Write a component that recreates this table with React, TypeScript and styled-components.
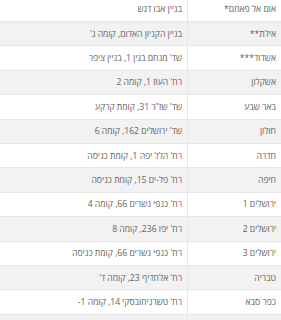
import React from "react";
import styled, { createGlobalStyle } from "styled-components";

const Global = createGlobalStyle`
  html, body { margin: 0; padding: 0; background: #ffffff; }
  body { font-family: "Open Sans", "Noto Sans", sans-serif; overflow: hidden; }
`;

const Table = styled.table`
  width: 100%;
  border-collapse: collapse;
  direction: rtl;
  margin-top: -2.4px;
  font-family: "Open Sans", "Noto Sans", sans-serif;
  font-size: 8.6px;
  color: #626262;
`;

const Row = styled.tr<{ $shade: boolean }>`
  background: ${(p) => (p.$shade ? "#f2f2f2" : "#ffffff")};
  border-bottom: 1px solid #e6e6e6;
`;

const Cell = styled.td<{ $first?: boolean }>`
  padding: 4.5px 5px 4.5px 5px;
  height: 14.4px;
  line-height: 14.4px;
  text-align: right;
  white-space: nowrap;
  width: ${(p) => (p.$first ? "83px" : "auto")};
  border-left: ${(p) => (p.$first ? "1px solid #e6e6e6" : "none")};
`;

const rows: [string, string][] = [
  ["אום אל פאחם*", "בניין אבו דגש"],
  ["אילת**", "בניין הקניון האדום, קומה ג'"],
  ["אשדוד***", "שד' מנחם בגין 1, בניין ציפר"],
  ["אשקלון", "רח' העוז 1, קומה 2"],
  ["באר שבע", "שד' שז\"ר 31, קומת קרקע"],
  ["חולון", "שד' ירושלים 162, קומה 6"],
  ["חדרה", "רח' הלל יפה 1, קומת כניסה"],
  ["חיפה", "רח' פל-ים 15, קומת כניסה"],
  ["ירושלים 1", "רח' כנפי נשרים 66, קומה 4"],
  ["ירושלים 2", "רח' יפו 236, קומה 8"],
  ["ירושלים 3", "רח' כנפי נשרים 66, קומת כניסה"],
  ["טבריה", "רח' אלחדיף 23, קומה ד'"],
  ["כפר סבא", "רח' טשרניחובסקי 14, קומה 1-"],
  ["", ""],
];

export default function App() {
  return (
    <>
      <Global />
      <Table>
        <tbody>
          {rows.map(([city, addr], i) => (
            <Row key={i} $shade={i % 2 === 1}>
              <Cell $first>{city}</Cell>
              <Cell>{addr}</Cell>
            </Row>
          ))}
        </tbody>
      </Table>
    </>
  );
}
